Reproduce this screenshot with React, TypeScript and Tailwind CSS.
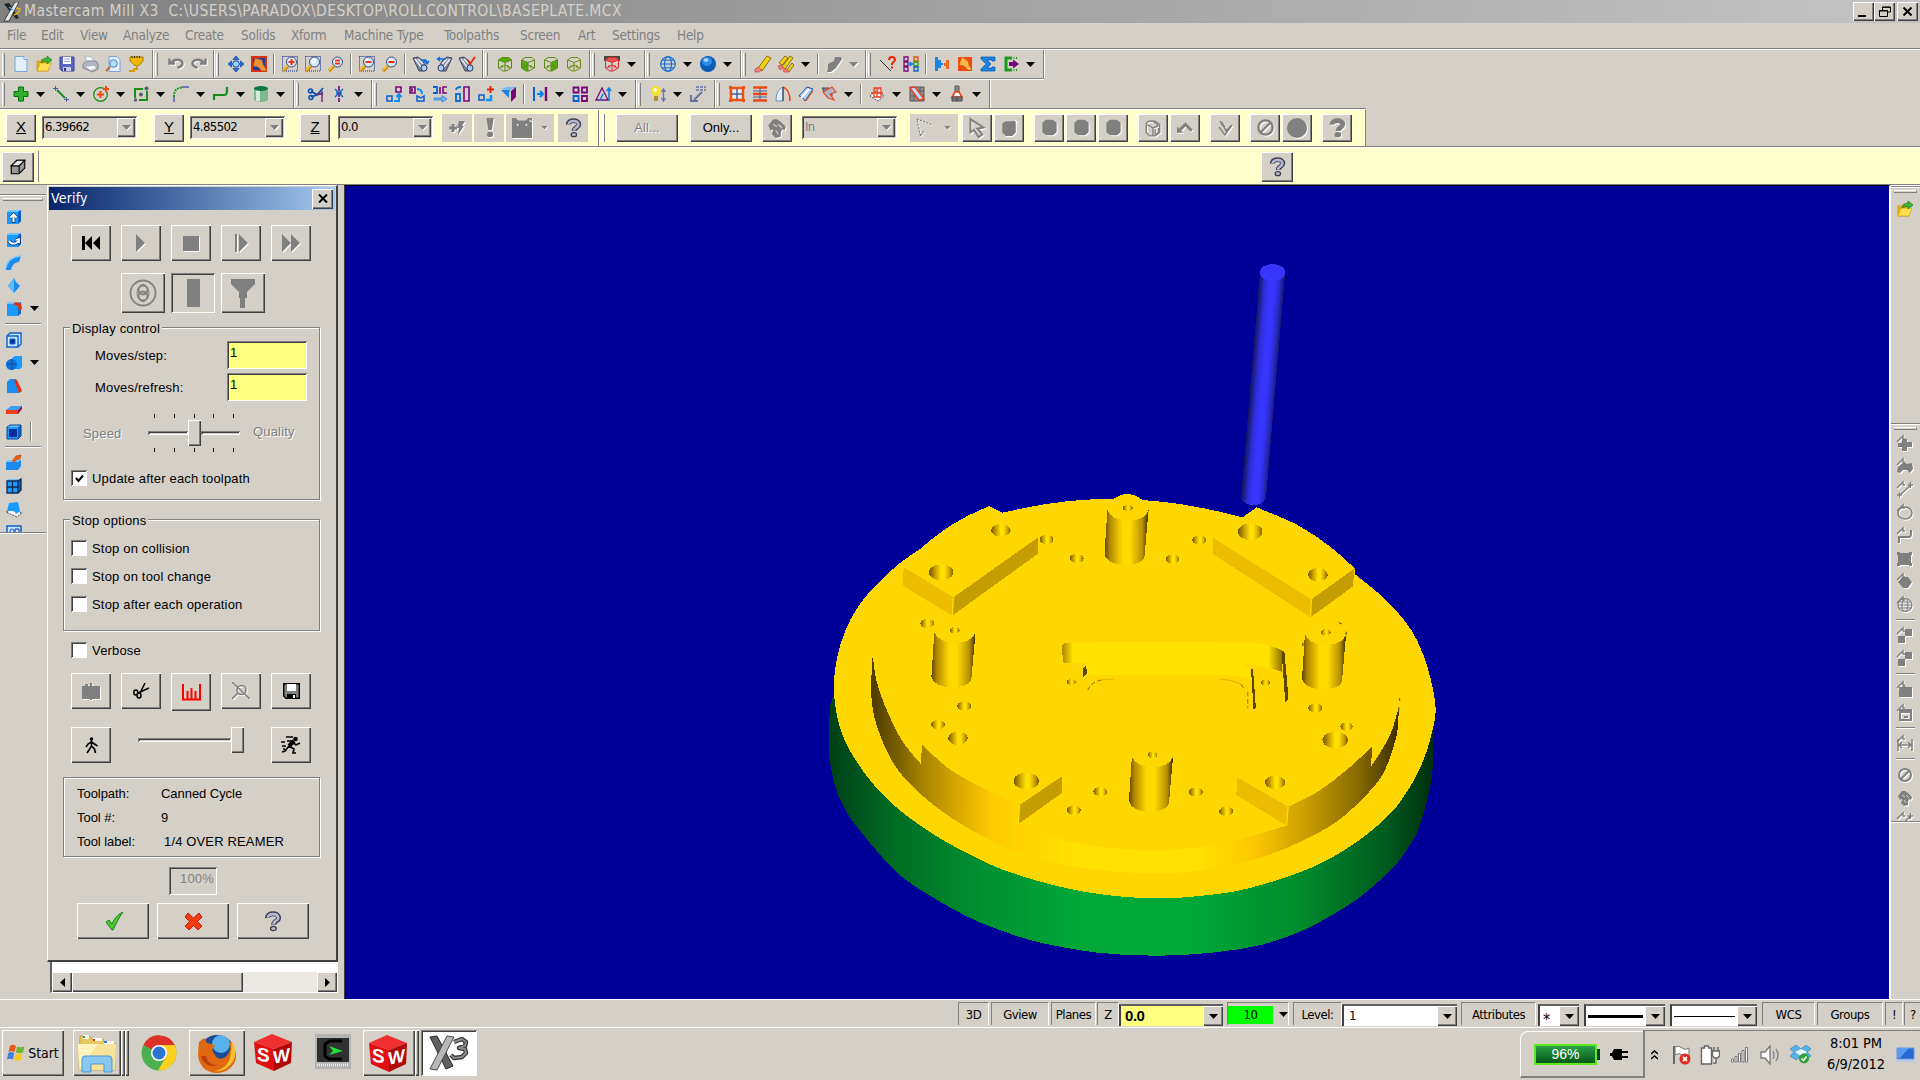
import React from "react";

type Kids = { children?: React.ReactNode; className?: string };

const RAISED =
  "bg-[#d4d0c8] shadow-[inset_1px_1px_0_#fff,inset_-1px_-1px_0_#404040,inset_-2px_-2px_0_#808080]";
const SUNK = "shadow-[inset_1px_1px_0_#808080,inset_-1px_-1px_0_#fff,inset_2px_2px_0_#404040]";
const UI = "font-['DejaVu_Sans_Condensed','DejaVu_Sans',sans-serif]";
const EMB = "drop-shadow-[1px_1px_0_#fff]";

/* ---------- icons, drawn on a 16 unit grid ---------- */

const lens = (
  <>
    <path d="M1 15l5-5" stroke="#c98a10" strokeWidth="3.2" />
    <path d="M1 14l5-5" stroke="#ffc83a" strokeWidth="1.4" />
    <circle cx="9.5" cy="6" r="5" fill="#cfe6fb" stroke="#3b4f80" />
    <circle cx="8.5" cy="5" r="2.6" fill="#fff" fillOpacity=".8" />
  </>
);
const dots = <rect x=".5" y=".5" width="15" height="14.5" fill="none" stroke="#0a2a9c" strokeDasharray="1 1" />;
const binoc = (
  <>
    <path d="M0 2l5-1 5 4 3 6-3 4-4 0z" fill="#7c849c" stroke="#3f4660" />
    <path d="M2 3l7 9M5 3l5 5" stroke="#e8ecf5" strokeWidth="1.6" />
    <ellipse cx="11" cy="12" rx="3" ry="3.2" fill="#a9cdf2" stroke="#2d3a5c" />
  </>
);
const cubeLines = (c: string) => (
  <path d="M1.5 4L5 1.5h7L14.500 4v8L9 15H6L1.500 12zM1.500 4L8 6.500 14.500 4M8 6.500V15M5 9v3M11 9v3M8 9L2 12M8 9l6 3" fill="none" stroke={c} />
);
const hex = <path d="M5 1.500h6L14 4v8l-3 2.500H5L2 12V4z" fill="#808080" />;
const solid = (
  <>
    <path d="M1 3l3-2h11v11l-3 3H1z" fill="#0a8bf0" />
    <path d="M1 3h11v12H1z" fill="#1a9bff" />
    <path d="M12 3l3-2v11l-3 3z" fill="#0560c0" />
    <path d="M1 3l3-2h11l-3 2z" fill="#6cc4ff" />
  </>
);
const qmark = (a: string, b: string) => (
  <>
    <path d="M3.500 5.500C3.500 1 12.500 1 12.500 5.500c0 2.600-4 2.500-4 5.500" fill="none" stroke={b} strokeWidth="4" />
    <path d="M3.900 5.300C4 1.500 12 1.500 12.200 5.500c0 2.400-3.800 2.600-3.800 5.200" fill="none" stroke={a} strokeWidth="2.200" />
    <ellipse cx="8.300" cy="14" rx="2.300" ry="1.700" fill={a} stroke={b} />
  </>
);
const brush = (
  <>
    <path d="M1 1h14v14H1z" fill="#f04a10" />
    <path d="M5 1l6 4 1 4 3 5-4 0-4-4-5-1z" fill="#ffb84a" stroke="#c05a10" strokeWidth=".6" />
  </>
);
const chk = <path d="M0 6L6 0v3h2" fill="none" stroke="#808080" strokeWidth="1.400" />;

const ICONS: Record<string, React.ReactNode> = {
  new: (
    <>
      <path d="M2 .5h9l3 3v12H2z" fill="#e4effc" stroke="#7aa2dc" />
      <path d="M11 .5v3h3" fill="#fff" stroke="#7aa2dc" />
    </>
  ),
  open: (
    <>
      <path d="M1 5h4l1-2h6v12H1z" fill="#e8b410" stroke="#b98500" strokeWidth=".6" />
      <path d="M1 15l3-8h11l-3 8z" fill="#ffdf50" stroke="#c99a00" strokeWidth=".6" />
      <path d="M5 7c1-4 4-5 6-5V0l5 4-5 4V5.500c-2 0-4 0-6 1.500z" fill="#3cb43c" stroke="#187018" strokeWidth=".6" />
    </>
  ),
  save: (
    <>
      <path d="M1 1h14v14H3l-2-2z" fill="#5a64c8" stroke="#3a4298" />
      <path d="M4 1h8v7H4z" fill="#fff" />
      <path d="M5 3h6M5 5.500h6" stroke="#9aa0d8" />
      <path d="M4 11h8v4H4z" fill="#c8ccec" />
      <path d="M5 12h2v3H5z" fill="#303878" />
    </>
  ),
  print: (
    <>
      <path d="M3 0l7 1 2 6H5z" fill="#f4f8ff" stroke="#9ab" strokeWidth=".7" />
      <path d="M1 8l4-3h9l2 3v5l-5 3-10-4z" fill="#b4b8c4" stroke="#666c7c" strokeWidth=".7" />
      <path d="M4 11l8-1 2 2-5 2z" fill="#fff" />
    </>
  ),
  preview: (
    <>
      <path d="M4 .5h8l3 3v12H4z" fill="#e4effc" stroke="#7aa2dc" />
      <circle cx="8.500" cy="7.500" r="3.800" fill="#b8dcf8" stroke="#4a80b8" />
      <path d="M1 15l4-4" stroke="#b07838" strokeWidth="2.400" />
    </>
  ),
  post: (
    <>
      <path d="M2 1h13v4L11 9.500H7L2 5z" fill="#f0b800" stroke="#a87800" />
      <path d="M4 0v2M6.500 0v2M9 0v2M11.500 0v2" stroke="#403000" />
      <path d="M9 9v4H6v2H1" fill="none" stroke="#d89c00" strokeWidth="2" />
    </>
  ),
  undo: <path d="M1.500 2.500V7.500H7M3 7c3-5 12-4 11.500 1-.5 2.500-3 3-5 4" fill="none" stroke="#808080" strokeWidth="2.500" />,
  redo: <path d="M14.500 2.500V7.500H9M13 7C10 2 1 3 1.500 8c.5 2.500 3 3 5 4" fill="none" stroke="#808080" strokeWidth="2.500" />,
  pan: (
    <>
      <path d="M8 0l3 3.500H5zM8 16l3-3.500H5zM0 8l3.500-3v6zM16 8l-3.500-3v6z" fill="#1c7ce8" stroke="#0a3c98" strokeWidth=".7" />
      <path d="M6 5h4l1.500 3L10 11H6L4.500 8z" fill="#9cd0ff" stroke="#0a4cb0" />
    </>
  ),
  repaint: (
    <>
      <path d="M1 1h14v14H1z" fill="#1840a0" stroke="#d83010" strokeWidth="2" />
      <path d="M4 2l7 2 1 4 4 7-5 0-4-4-5-1z" fill="#f0923c" stroke="#a84a10" strokeWidth=".6" />
    </>
  ),
  zoomPlusBox: <>{dots}{lens}<path d="M9.500 3v6M6.500 6h6" stroke="#f03010" strokeWidth="2" /></>,
  zoomBox: <>{dots}{lens}</>,
  zoomEq: <>{lens}<path d="M7 4.500h5M7 7.500h5" stroke="#f03010" strokeWidth="1.800" /></>,
  zoomMinusBox: <>{dots}{lens}<path d="M6.500 6h6" stroke="#f03010" strokeWidth="2" /></>,
  zoomMinus: <>{lens}<path d="M6.500 6h6" stroke="#f03010" strokeWidth="2" /></>,
  bin1: <>{binoc}<path d="M8 4h4c2 0 2 2 2 4M11 5l3 3 2-3" stroke="#0a6ae0" fill="none" strokeWidth="1.400" /></>,
  bin2: <><g transform="matrix(-1 0 0 1 16 0)">{binoc}</g><path d="M1 3h9M4 1L1.500 3 4 5" stroke="#0a6ae0" fill="none" strokeWidth="1.400" /></>,
  bin3: <>{binoc}<path d="M9 4l2 4 5-7" stroke="#e02810" fill="none" strokeWidth="1.800" /></>,
  cubeTop: <><path d="M1.500 4L5 1.500h7L14.500 4 8 6.500z" fill="#58a810" />{cubeLines("#5c8c10")}</>,
  cubeFront: <><path d="M1.500 4L8 6.500V15H6l-4.500-3z" fill="#58a810" />{cubeLines("#5c8c10")}</>,
  cubeRight: <><path d="M14.500 4L8 6.500V15h1l5.500-3z" fill="#58a810" />{cubeLines("#5c8c10")}</>,
  cubeIso: cubeLines("#6c8c10"),
  cubeRed: (
    <>
      <path d="M0 0h16v5H0z" fill="#484848" />
      <path d="M1.500 4L5 1.500h7L14.500 4v8L9 15H6l-4.500-3z" fill="#d4d0c8" />
      <path d="M1.500 4L5 1.500h7L14.500 4 8 6.500z" fill="#f05050" />
      {cubeLines("#d82830")}
    </>
  ),
  globe: (
    <g fill="none" stroke="#0a6ad0" strokeWidth="1.100">
      <circle cx="8" cy="8" r="7.300" />
      <ellipse cx="8" cy="8" rx="3.500" ry="7.300" />
      <path d="M.7 8h14.600M2 4.200h12M2 11.800h12" />
    </g>
  ),
  ball: (
    <>
      <circle cx="8" cy="8" r="8" fill="#0a5cb4" />
      <ellipse cx="7" cy="5.500" rx="5" ry="4.500" fill="#2c8ce8" />
      <ellipse cx="6" cy="4" rx="2.500" ry="1.800" fill="#a8dcff" />
    </>
  ),
  pencil: (
    <>
      <path d="M3 12L12 0l4 2L7 15z" fill="#f0d010" stroke="#6c5800" strokeWidth=".8" />
      <path d="M0 13l3-2 4 3-3 2H0z" fill="#f88080" stroke="#c03030" strokeWidth=".6" />
    </>
  ),
  pencils: (
    <>
      <path d="M1 7L7 0l3 2-6 7zM4 11L12 0l3 2L7 13zM9 14l5-7 2 2-5 7z" fill="#f0d010" stroke="#6c5800" strokeWidth=".8" />
      <path d="M0 10l3-1 2 3-3 2zM5 14l4-1 2 3H6z" fill="#f88080" stroke="#c03030" strokeWidth=".6" />
    </>
  ),
  unerase: <path d="M2 8l6-3 1-4h6l1 2-6 9-5 4H1l1-4z" fill="#808080" />,
  what: (
    <>
      <path d="M0 4l11 11" stroke="#303030" />
      <path d="M9 4c0-4 6-4 6 0 0 2-3 2-3 4v1M12 10.500v2" fill="none" stroke="#e82808" strokeWidth="2" />
    </>
  ),
  chains: (
    <>
      <path d="M1 1h4v4H1zM1 6h4v4H1zM1 11h4v4H1z" fill="none" stroke="#780878" strokeWidth="1.300" />
      <path d="M11 1h4v4h-4z" fill="none" stroke="#f05010" strokeWidth="1.300" />
      <path d="M11 6h4v4h-4z" fill="none" stroke="#2c9c10" strokeWidth="1.300" />
      <path d="M11 11h4v4h-4z" fill="none" stroke="#0a60d0" strokeWidth="1.300" />
      <path d="M5 8h2M7 6l3 2-3 2z" fill="#0a80f0" stroke="#0a80f0" />
    </>
  ),
  puzzle: (
    <>
      <path d="M1 1h3v3h3v3h2v2H7v3H4v3H1z" fill="#1a84e0" />
      <path d="M15 4v9h-3v-3h-2V7h2V4z" fill="#f06818" />
    </>
  ),
  brush,
  sigma: <path d="M1 1h14v4h-3V4H7l4 4-4 4h5v-1h3v4H1v-2l5-5-5-5z" fill="#1c84e0" stroke="#0a50a8" strokeWidth=".7" />,
  exit: (
    <>
      <path d="M9 2H3v12h6" fill="none" stroke="#18a018" strokeWidth="3" />
      <path d="M6 6h4V3.500l6 4.500-6 4.500V10H6z" fill="#780878" />
      <path d="M11 1v2M13.500 1v2M11 13v2M13.500 13v2" stroke="#18a018" />
    </>
  ),
  plus: <path d="M5.500 1h5v4.500H15v5h-4.500V15h-5v-4.500H1v-5h4.500z" fill="#30b030" stroke="#087008" />,
  line: (
    <>
      <path d="M4 4l8 8" stroke="#189018" strokeWidth="2" />
      <path d="M0 2.500h5M2.500 0v5M11 13.500h5M13.500 11v5" stroke="#5858a8" />
    </>
  ),
  circ: (
    <>
      <circle cx="7.500" cy="8.500" r="6.800" fill="none" stroke="#189018" strokeWidth="1.300" />
      <path d="M4 8.500h7M7.500 5v7M10 3h6M13 0v6" stroke="#f84810" strokeWidth="2" />
    </>
  ),
  rect: (
    <>
      <path d="M2 12V3h8M6 14h8V5" fill="none" stroke="#189018" strokeWidth="2" />
      <circle cx="13.500" cy="2.500" r="2" fill="#586070" />
      <circle cx="8" cy="8.500" r="2" fill="#586070" />
      <circle cx="2.500" cy="14" r="1.700" fill="#586070" />
    </>
  ),
  fillet: (
    <>
      <path d="M1 16v-5M9 1h7" stroke="#5858a8" strokeWidth="1.500" />
      <path d="M1 11C1 5 3 2 9 1.500" fill="none" stroke="#189018" strokeWidth="2" strokeDasharray="2 1" />
    </>
  ),
  spline: <path d="M1 14V9h10c3 0 3-2 3-8" fill="none" stroke="#109018" strokeWidth="2.200" />,
  cyl: (
    <>
      <path d="M1 2h14v12c-3 2.500-11 2.500-14 0z" fill="#7cb890" />
      <path d="M3 3h4v12H3z" fill="#d4ecdc" />
      <ellipse cx="8" cy="2.500" rx="7" ry="2.500" fill="#087840" />
    </>
  ),
  trim: (
    <>
      <path d="M3 5l6 4 6-7M3 11l12-4" stroke="#0a50b0" strokeWidth="1.800" fill="none" />
      <ellipse cx="2.500" cy="5" rx="2" ry="2" fill="none" stroke="#0a50b0" strokeWidth="1.500" />
      <ellipse cx="3" cy="11.500" rx="2" ry="2" fill="none" stroke="#0a50b0" strokeWidth="1.500" />
      <path d="M8 8h7M14 5v11" stroke="#803080" strokeWidth="1.600" />
    </>
  ),
  brk: (
    <>
      <path d="M8 0v16" stroke="#803080" strokeWidth="2" strokeDasharray="5 1" />
      <path d="M4 3l4 4 4-4M4 11l4-4 4 4M5 7h6" stroke="#1060c8" strokeWidth="1.400" fill="none" />
    </>
  ),
  x1: <><path d="M10 1h5v5h-5z" fill="none" stroke="#780878" strokeWidth="1.600" /><path d="M1 10h5v5H1z" fill="none" stroke="#0a60d0" strokeWidth="1.600" /><path d="M8 15h5V9M10.500 11L13 8l2.500 3" fill="none" stroke="#0a90f0" strokeWidth="2" /></>,
  x2: <><path d="M1 1h5v6H1V5h2V3H1z" fill="none" stroke="#780878" strokeWidth="1.600" /><path d="M8 10v5h7v-5l-3 2z" fill="none" stroke="#0a60d0" strokeWidth="1.500" /><path d="M8 3c4 0 5 2 5 5" fill="none" stroke="#0a90f0" strokeWidth="2" /></>,
  x3: <><path d="M1 1h4v6H1" fill="none" stroke="#0a60d0" strokeWidth="1.800" /><path d="M15 1h-4v6h4M8 1v7" fill="none" stroke="#780878" strokeWidth="1.600" /><path d="M2 12h8V9.500l5 3.500-5 3V14H2z" fill="#70b8f8" stroke="#0a60d0" strokeWidth=".6" /></>,
  x4: <><path d="M1 8h4v7H1zM1 4c0-2 2-3 5-3" fill="none" stroke="#0a70d8" strokeWidth="1.800" /><path d="M9 1h5v14H9z" fill="none" stroke="#780878" strokeWidth="1.600" /></>,
  x5: <><path d="M1 9h5v5H1z" fill="none" stroke="#0a60d0" strokeWidth="1.600" /><path d="M8 14h5V9" fill="none" stroke="#0a90f0" strokeWidth="2.500" /><path d="M9 3.500h7M12.500 0v7" stroke="#f02010" strokeWidth="2" /></>,
  x6: <><path d="M0 3l6-2h9L9 4z" fill="#70b8f8" /><path d="M0 4h9l-1 3 0 5z" fill="#1a84e0" /><path d="M10 5l5-4v10l-5 5z" fill="#780878" /></>,
  x7: <><path d="M2 1v14" stroke="#0a60d0" strokeWidth="2" /><path d="M14 1v14" stroke="#780878" strokeWidth="2.400" /><path d="M5 8h5M8 5l3 3-3 3" stroke="#0a80f0" strokeWidth="2" fill="none" /></>,
  x8: <g fill="none" strokeWidth="1.800"><path d="M1.500 1.500h5v5h-5zM10 1.500h5v5h-5zM10 10h5v5h-5z" stroke="#780878" /><path d="M1.500 10h5v5h-5z" stroke="#0a60d0" /></g>,
  x9: <><path d="M1 14L7 2l6 12z" fill="none" stroke="#780878" strokeWidth="1.300" /><path d="M5 14l3-6M14 15V3M11.500 5L14 2l2 3" fill="none" stroke="#0a80e0" strokeWidth="1.600" /></>,
  bulb: <><circle cx="6" cy="5" r="5" fill="#f8e030" /><circle cx="5" cy="4" r="2" fill="#fffbd0" /><path d="M4 10h4v5H4z" fill="#b09030" /><path d="M13.500 4v10M11.500 6l2-3 2 3M11.500 12l2 3 2-3" fill="none" stroke="#6870a8" strokeWidth="1.300" /></>,
  dim: <><path d="M6 1h10M6 4h10" stroke="#6870a8" strokeDasharray="3 1" strokeWidth="1.400" /><path d="M12 6l-8 8M1 9v6h7" stroke="#6870a8" strokeWidth="2" fill="none" /></>,
  s1: <><path d="M2 2h12v12H2z" fill="#e8ecf8" stroke="#f05010" strokeWidth="2.500" /><path d="M8 3v10M3 8h10" stroke="#486098" strokeWidth="1.500" /><path d="M0 0h3v3H0zM13 0h3v3h-3zM0 13h3v3H0zM13 13h3v3h-3z" fill="#f05010" /></>,
  s2: <><path d="M1 1.500h14M1 14.500h14M1 8h14" stroke="#f04810" strokeWidth="2.400" /><path d="M1 5h14M1 11h14M8 2v12" stroke="#486098" /></>,
  s3: <><path d="M1 15C1 8 3 3 8 1v14z" fill="#e0f0ff" stroke="#6890c0" /><path d="M8 1c5 2 7 7 7 14" fill="#c8dcf4" stroke="#f04810" strokeWidth="1.600" /><path d="M8 1v14" stroke="#404858" strokeWidth="1.300" /></>,
  s4: <><path d="M1 10L9 1l6 2-8 12-3-4z" fill="#a8d4f8" stroke="#385080" /><path d="M3 12l8-9" stroke="#fff" strokeWidth="2" /><path d="M8 15l7-10" stroke="#f04810" /></>,
  s5: <><path d="M1 2h7l3 3v5H6z" fill="#808898" stroke="#404858" /><path d="M2 6l9-5 4 5-6 2 4 6-6-2z" fill="#a8b8d8" stroke="#f04810" strokeWidth="1.200" /></>,
  m1: <><path d="M1 10l6-5 8 5-6 5z" fill="#fff" stroke="#485068" strokeDasharray="2 1" /><path d="M5 2h7v9H5zM2 7h12M8 2v9" fill="none" stroke="#f04020" strokeWidth="1.300" /></>,
  m2: <><path d="M1 1h14v14H1z" fill="#908c90" stroke="#585458" /><path d="M1 5h14M1 10h14M5 1v14M11 1v14" stroke="#585458" strokeWidth=".8" /><path d="M1 2l5-1 9 12-5 1z" fill="#b8e0ff" stroke="#f04020" strokeWidth="1.500" /></>,
  m3: <><path d="M6 0h4v6H6z" fill="#888" stroke="#555" /><path d="M6 6h4l3 5H3z" fill="#fff" stroke="#f04020" strokeWidth="1.700" /><path d="M3 11h10v4H3zM3 13h10M8 11v4" fill="#999" stroke="#444" /></>,
  snap: <><path d="M0 8h8M4 4v8" stroke="#808080" strokeWidth="3" /><path d="M10 1h6l-3 5h2l-6 9 1-7H8z" fill="#808080" /></>,
  bang: <><path d="M5.500 0h6l-1.500 10H7z" fill="#808080" /><ellipse cx="8.500" cy="13.800" rx="2.500" ry="2.200" fill="#808080" /></>,
  bag: <><path d="M0 0h3l2 2h6l2-2h3v16H0z" fill="#808080" /><path d="M4 5l1 1M11 5l1 1M14 2l2 1" stroke="#fff" /></>,
  help: qmark("#b4b8cc", "#3c3e50"),
  helpG: qmark("#808080", "#808080"),
  gear: <><path d="M1 6l4-5 3 0 3 2 4 4-1 3-2-1-1 3 0 3-4 1-3-3 1-4-2 1z" fill="#808080" /><path d="M5 5l3 2M9 5l3 3M7 10l2 3" stroke="#d4d0c8" /></>,
  poly: <path d="M3 15L0 0l13 5M3 15l3-4" fill="none" stroke="#808080" strokeDasharray="2 1" />,
  cursor: <path d="M2 1v11l3-2 4 6 3-2-4-5 5-1z" fill="none" stroke="#808080" strokeWidth="1.700" />,
  hex,
  hexC: <><path d="M2 4l3-2h6l3-1v11l-3 3H5l-3-3z" fill="#808080" /><path d="M13 1l2 2" stroke="#fff" /></>,
  cubeG: <><path d="M4 2h6l4 3v7l-4 3H5l-3-3V4z" fill="none" stroke="#808080" strokeWidth="1.200" /><path d="M8 2l5 4M3 5l5 3v7M13 6l-5 2M10 9v5l3-2V8" fill="none" stroke="#808080" strokeWidth="1.300" /></>,
  back: <path d="M0 13V7l2 2 6-6 7 7-2 2-5-5-4 4 2 2z" fill="#808080" />,
  accept: <path d="M3 1l5 6M2 7l6 8 7-10-6 6-4-9M4 3l6 8" fill="none" stroke="#808080" strokeWidth="1.500" />,
  no: <><circle cx="8" cy="8" r="6" fill="none" stroke="#808080" strokeWidth="2" /><path d="M4 12l8-8" stroke="#808080" strokeWidth="2" /></>,
  disc: <circle cx="8" cy="8" r="8" fill="#808080" />,
  block: <><path d="M2 7l5-5h7v7l-5 5H2z" fill="#989898" stroke="#000" /><path d="M2 7l5-5h7L9 7z" fill="#e4e4e4" stroke="#000" /><path d="M9 7v7" stroke="#000" /></>,
  // solids toolbar
  sExt: <>{solid}<path d="M7.500 14V6M4.500 8.500l3-3 3 3" fill="none" stroke="#083878" strokeWidth="3.600" /><path d="M7.500 13V6M4.500 8.500l3-3 3 3" fill="none" stroke="#fff" strokeWidth="2" /></>,
  sRev: <>{solid}<path d="M3 9c2 4 8 3 9 0M10 8l3-1v4" fill="none" stroke="#083878" strokeWidth="3.600" /><path d="M3 9c2 4 8 3 9 0M10 8l3-1v4" fill="none" stroke="#fff" strokeWidth="1.800" /></>,
  sSwp: <><path d="M0 15C0 6 6 1 15 1l-2 6c-4 0-7 3-8 8z" fill="#1a8cf0" /><path d="M0 13C1 6 6 2 15 1" fill="none" stroke="#7cc8ff" strokeWidth="1.500" /></>,
  sLoft: <><path d="M8 0l2 4 4 4-6 7-6-7 3-4z" fill="#1a8cf0" /><path d="M8 0v15L2 8z" fill="#60b8ff" /></>,
  sFil: <>{solid}<path d="M8 2c5-2 8 1 8 6l-3 2c0-4-1-6-5-6z" fill="#e83010" /></>,
  sShell: <><path d="M1 4l3-3h11v11l-3 3H1z" fill="#c8e4fc" stroke="#0a60d0" strokeWidth="1.400" /><path d="M1 4h11v11" fill="none" stroke="#0a60d0" strokeWidth="1.400" /><path d="M4 7h5v5H4z" fill="#0a3090" stroke="#0a60d0" /></>,
  sBool: <><path d="M6 3l3-2h7v11l-2 2H6z" fill="#1a9bff" /><circle cx="5.500" cy="9.500" r="5.500" fill="#0a74d8" /><path d="M6 4v11M1 9h10" stroke="#0a4c9c" /></>,
  sDraft: <><path d="M1 4l3-3h6l5 12-3 2H1z" fill="#1a8cf0" /><path d="M8 2h3l5 11-3 2z" fill="#e83010" /></>,
  sTrim: <><path d="M0 9l5-4h11l-4 4z" fill="#38a0f8" /><path d="M0 9h12v4H0z" fill="#f03c10" /><path d="M12 9l4-4v3l-4 5z" fill="#901040" /></>,
  sThick: <>{solid}<path d="M3 5h8v8H3z" fill="#082c98" /><path d="M1 3l3-2h11v11l-3 3H1z" fill="none" stroke="#064090" /></>,
  sRem: <><path d="M0 7l3-2h12v6l-3 4H0z" fill="#1a8cf0" /><path d="M0 7l3-2h12l-3 2z" fill="#7cc8ff" /><path d="M6 6l4-5 5-1-1 4-4 1-1 2z" fill="#f06018" stroke="#a03008" strokeWidth=".5" /></>,
  sGrid: <>{solid}<path d="M1 3h11v12H1zM6.500 3v12M1 9h11M12 3l3-2v11l-3 3" fill="none" stroke="#102850" strokeWidth="1.300" /></>,
  sSurf: <><path d="M0 11l6-3 10 4-5 4z" fill="#fff" stroke="#404858" strokeDasharray="2 1" /><path d="M3 2l9-1 2 9-4 3c-1-4-5-3-9-3z" fill="#1a9bff" /></>,
  sLast: <><path d="M1 2h14v14H1z" fill="#c8e4fc" stroke="#0a60d0" strokeWidth="1.500" /><circle cx="6" cy="7" r="2" fill="none" stroke="#0a60d0" /><path d="M9 5h4v4H9z" fill="none" stroke="#0a3090" /></>,
  // right side quick masks
  qPlus: <>{chk}<path d="M5 3h5v3h5v5h-5v4H5v-4H1V7h4z" fill="#808080" /></>,
  qBone: <>{chk}<path d="M1 8l6-5 3 2 5-1 1 6-3 4-3-3H6l-3 3-3-1z" fill="#808080" /></>,
  qLine: <>{chk}<path d="M3 13L13 4M0 13h5M2.500 10.500v5M11 3h5M13.500 0v6" fill="none" stroke="#808080" strokeWidth="1.300" /></>,
  qCirc: <>{chk}<ellipse cx="8" cy="8" rx="7" ry="6" fill="none" stroke="#808080" strokeWidth="1.500" /></>,
  qSpl: <>{chk}<path d="M2 15V9h10c2 0 2-1 2-7" fill="none" stroke="#808080" strokeWidth="2" /></>,
  qSq: <path d="M0 1h3v1h9V1h3v3h-1v8h1v3h-3v-1H3v1H0v-3h1V4H0z" fill="#808080" />,
  qDia: <>{chk}<path d="M1 8l4-5h6l4 5-4 6H6z" fill="#808080" /></>,
  qGlobe: <>{chk}<g fill="none" stroke="#808080" strokeWidth="1.200"><ellipse cx="8" cy="8" rx="7" ry="6.500" /><ellipse cx="8" cy="8" rx="3" ry="6.500" /><path d="M1 8h14M2 5h12M2 11h12" /></g></>,
  qTwo: <>{chk}<path d="M8 1h7v7H8zM1 8h7v7H1z" fill="#808080" /></>,
  qFold: <>{chk}<path d="M2 5h3l2-2 2 2h6v10H2z" fill="#808080" /></>,
  qBox: <>{chk}<path d="M3 5h11v10H3z" fill="none" stroke="#808080" strokeWidth="2" /><path d="M3 4h11v4H3zM7 11h4v2H7z" fill="#808080" /></>,
  qDim: <>{chk}<path d="M1 3v12M15 3v12M2 9h12M5 6L2 9l3 3M11 6l3 3-3 3" fill="none" stroke="#808080" strokeWidth="1.500" /></>,
};

function Ic({ n, g = false, s = 16 }: { n: string; g?: boolean; s?: number }) {
  return (
    <svg viewBox="0 0 16 16" width={s} height={s} className={`shrink-0 overflow-visible ${g ? EMB : ""}`} fill="none">
      {ICONS[n]}
    </svg>
  );
}
const Tri = ({ g = false }: { g?: boolean }) => (
  <svg viewBox="0 0 9 5" width="9" height="5" className={g ? EMB : ""}>
    <path d="M0 0h9L4.500 5z" fill={g ? "#808080" : "#000"} />
  </svg>
);

/* ---------- toolbar parts ---------- */

/** Toolbar group; "v" opens a menu arrow, "|" a separator, a leading "-" a disabled icon. */
function Group({ items, className, grip = "mr-[6px]" }: { items: string; className: string; grip?: string }) {
  return (
    <div className={`flex h-full shrink-0 items-center border-r border-[#808080] shadow-[1px_0_0_#fff] ${className}`}>
      <i className={`ml-[2px] h-[23px] w-[3px] shrink-0 border-l border-r border-l-white border-r-[#808080] ${grip}`} />
      {items.split(" ").map((k, i) =>
        k === "v" || k === "-v" ? (
          <span key={i} className="flex w-[17px] shrink-0 justify-center"><Tri g={k === "-v"} /></span>
        ) : k === "|" ? (
          <span key={i} className="flex w-2 shrink-0 justify-center"><i className="h-5 w-[2px] border-l border-r border-l-[#808080] border-r-white" /></span>
        ) : (
          <span key={i} className="flex w-[23px] shrink-0 justify-center"><Ic n={k.replace("-", "")} g={k[0] === "-"} /></span>
        )
      )}
    </div>
  );
}

const Btn = ({ children, className = "" }: Kids) => (
  <div className={`flex shrink-0 items-center justify-center ${RAISED} ${className}`}>{children}</div>
);
const Flat = ({ children, className = "w-[30px]" }: Kids) => (
  <div className={`flex h-7 shrink-0 items-center justify-center gap-2 bg-[#d4d0c8] ${className}`}>{children}</div>
);
function Combo({ children, className = "", dis = true }: Kids & { dis?: boolean }) {
  return (
    <div className={`flex h-[23px] w-[95px] shrink-0 items-stretch bg-[#d4d0c8] p-[2px] ${SUNK} ${className}`}>
      <span className="flex-1 pl-px text-[13px] leading-[17px] tracking-[-0.6px]">{children}</span>
      <Btn className="w-[18px]"><Tri g={dis} /></Btn>
    </div>
  );
}

function CoordBar() {
  const b = "h-7 w-[30px]";
  return (
    <div className={`flex h-[36px] w-[1366px] items-center border-r border-[#808080] bg-[#ffffcc] pb-[1px] pl-[6px] text-[13px] ${UI}`}>
      <Btn className={b}><u className="font-['Liberation_Sans'] text-[15px] font-normal">X</u></Btn>
      <Combo className="ml-[6px]">6.39662</Combo>
      <Btn className={`ml-[17px] ${b}`}><u className="font-['Liberation_Sans'] text-[15px]">Y</u></Btn>
      <Combo className="ml-[6px]">4.85502</Combo>
      <Btn className={`ml-[15px] ${b}`}><u className="font-['Liberation_Sans'] text-[15px]">Z</u></Btn>
      <Combo className="ml-2">0.0</Combo>
      <Flat className="ml-[9px] w-[30px]"><Ic n="snap" g /></Flat>
      <Flat className="ml-[2px] w-[30px]"><Ic n="bang" g s={19} /></Flat>
      <Flat className="ml-[2px] w-[48px]"><Ic n="bag" g s={20} /><span className="scale-75"><Tri g /></span></Flat>
      <Flat className="ml-1 w-[30px]"><Ic n="help" s={19} /></Flat>
      <i className="ml-[10px] h-9 w-px bg-[#808080]" />
      <i className="ml-[3px] h-7 w-[3px] border-l border-r border-l-white border-r-[#808080]" />
      <Btn className="ml-[11px] h-7 w-[62px]"><span className="font-['Liberation_Sans'] text-[13px] text-[#808080] [text-shadow:1px_1px_0_#fff]">All...</span></Btn>
      <Btn className="ml-[12px] h-7 w-[62px]"><span className="font-['Liberation_Sans'] text-[13px]">Only...</span></Btn>
      <Btn className={`ml-[10px] ${b}`}><Ic n="gear" g s={20} /></Btn>
      <Combo className="ml-[10px] text-[#808080]">In</Combo>
      <Flat className="ml-[13px] w-[48px]"><Ic n="poly" g s={18} /><span className="scale-75"><Tri g /></span></Flat>
      <Btn className={`ml-1 ${b}`}><Ic n="cursor" g s={19} /></Btn>
      <Btn className={`ml-[2px] ${b}`}><Ic n="hexC" g s={18} /></Btn>
      <Btn className={`ml-[10px] ${b}`}><Ic n="hex" g s={19} /></Btn>
      <Btn className={`ml-[2px] ${b}`}><Ic n="hex" g s={19} /></Btn>
      <Btn className={`ml-[2px] ${b}`}><Ic n="hex" g s={19} /></Btn>
      <Btn className={`ml-[10px] ${b}`}><Ic n="cubeG" g s={18} /></Btn>
      <Btn className={`ml-[2px] ${b}`}><Ic n="back" g s={17} /></Btn>
      <Btn className={`ml-[10px] ${b}`}><Ic n="accept" g s={16} /></Btn>
      <Btn className={`ml-[10px] ${b}`}><Ic n="no" g s={19} /></Btn>
      <Btn className={`ml-[2px] ${b}`}><Ic n="disc" g s={20} /></Btn>
      <Btn className={`ml-[10px] ${b}`}><Ic n="helpG" g s={19} /></Btn>
    </div>
  );
}

/* ---------- side toolbars ---------- */

function SideIcons({ items, g = false, className = "" }: { items: string; g?: boolean; className?: string }) {
  return (
    <div className={`flex flex-col overflow-hidden ${className}`}>
      {items.split(" ").map((k, i) =>
        k === "|" ? (
          <span key={i} className="flex h-2 shrink-0 items-center"><i className="h-[2px] w-full border-t border-b border-t-[#808080] border-b-white" /></span>
        ) : (
          <span key={i} className="flex h-[23px] shrink-0 items-center gap-2 pl-px">
            <Ic n={k.replace("+", "")} g={g} />
            {k.endsWith("+") && <Tri />}
            {k === "sThick" && <i className="h-[19px] w-px bg-[#808080] shadow-[1px_0_0_#fff]" />}
          </span>
        )
      )}
    </div>
  );
}
const HLine = () => <div className="h-[2px] shrink-0 border-t border-b border-t-[#808080] border-b-white" />;
const HGrip = ({ className = "" }: Kids) => (
  <div className={`h-[3px] shrink-0 border-t border-b border-r border-t-white border-b-[#808080] border-r-[#808080] ${className}`} />
);

/* ---------- verify dialog ---------- */

function Check({ children, on = false, className = "" }: Kids & { on?: boolean }) {
  return (
    <div className={`flex h-4 items-center ${className}`}>
      <span className={`mr-[5px] flex h-4 w-4 shrink-0 items-center justify-center bg-white ${SUNK}`}>
        {on && <svg width="9" height="9" viewBox="0 0 9 9"><path d="M1 4l2.500 3L8 1.500" fill="none" stroke="#000" strokeWidth="2" /></svg>}
      </span>
      {children}
    </div>
  );
}
const Box = ({ label, children, className = "" }: Kids & { label?: string }) => (
  <div className={`relative border border-[#808080] shadow-[1px_1px_0_#fff,inset_1px_1px_0_#fff] ${className}`}>
    {label && <span className="absolute -top-[7px] left-[6px] bg-[#d4d0c8] px-[2px] leading-[15px]">{label}</span>}
    {children}
  </div>
);
const Ticks = () => (
  <div className="ml-[6px] flex w-[80px] justify-between">
    {[0, 1, 2, 3, 4].map((t) => <i key={t} className="h-1 w-px bg-black" />)}
  </div>
);
const B40 = ({ children, className = "h-9" }: Kids) => <Btn className={`w-10 ${className}`}>{children}</Btn>;

function VerifyDialog() {
  return (
    <div className="flex h-[777px] w-[291px] flex-col border-l border-t border-r-2 border-b-2 border-l-white border-t-white border-r-[#404040] border-b-[#404040] bg-[#d4d0c8] p-px font-['Liberation_Sans'] text-[13px] leading-[15px] tracking-[0.18px]">
      <div className={`flex h-[23px] shrink-0 items-center justify-between bg-gradient-to-r from-[#0a246a] to-[#a6caf0] pl-[2px] pr-[2px] text-[14px] font-medium text-white ${UI}`}>
        Verify
        <Btn className="h-[20px] w-[21px]">
          <svg width="10" height="9" viewBox="0 0 10 9"><path d="M1 .5l8 8M9 .5l-8 8" stroke="#000" strokeWidth="2" /></svg>
        </Btn>
      </div>
      <div className="ml-[22px] mt-[15px] flex gap-[10px]">
        <B40><svg width="18" height="14" viewBox="0 0 18 14" className="-ml-px"><path d="M0 0h3v14H0zM10 0v14L3 7zM18 0v14l-7-7z" fill="#000" /></svg></B40>
        <B40><svg width="10" height="18" viewBox="0 0 10 18" className={EMB}><path d="M0 0l9 9-9 9z" fill="#808080" /></svg></B40>
        <B40><i className="h-[15px] w-4 bg-[#808080] shadow-[1px_1px_0_#fff]" /></B40>
        <B40><svg width="13" height="18" viewBox="0 0 13 18" className={EMB}><path d="M0 0h2v18H0zM4 0l9 9-9 9z" fill="#808080" /></svg></B40>
        <B40><svg width="18" height="18" viewBox="0 0 18 18" className={EMB}><path d="M0 0l9 9-9 9zM9 0l9 9-9 9z" fill="#808080" /></svg></B40>
      </div>
      <div className="ml-[72px] mt-[12px] flex gap-[6px]">
        <Btn className="h-10 w-11">
          <svg width="28" height="28" viewBox="0 0 28 28" fill="none" stroke="#808080" strokeWidth="1.800"><circle cx="14" cy="14" r="12.500" /><circle cx="14" cy="11" r="4.500" /><circle cx="14" cy="17" r="4.500" /><ellipse cx="14" cy="14" rx="6" ry="8.500" strokeWidth="1" /></svg>
        </Btn>
        <div className={`flex h-10 w-11 items-center justify-center ${SUNK}`}><i className="h-7 w-[13px] bg-[#808080]" /></div>
        <Btn className="h-10 w-11">
          <svg width="24" height="29" viewBox="0 0 24 29"><path d="M0 0h24v5l-8 8v6h-2v10H9V19H8v-6L0 5z" fill="#808080" /></svg>
        </Btn>
      </div>
      <Box label="Display control" className="ml-[14px] mt-[14px] h-[173px] w-[257px] shrink-0">
        <div className="ml-[31px] mt-[13px] flex h-7 items-center"><span className="w-[132px]">Moves/step:</span><span className={`h-7 w-20 bg-[#ffff80] pl-[3px] pt-[4px] ${SUNK}`}>1</span></div>
        <div className="ml-[31px] mt-1 flex h-7 items-center"><span className="w-[132px]">Moves/refresh:</span><span className={`h-7 w-20 bg-[#ffff80] pl-[3px] pt-[4px] ${SUNK}`}>1</span></div>
        <div className="ml-[19px] mt-[13px] flex h-[38px] items-center text-[#808080] [text-shadow:1px_1px_0_#fff]">
          <span className="w-[65px]">Speed</span>
          <div className="flex w-[92px] flex-col">
            <Ticks />
            <div className="my-[2px] flex h-[26px] items-center">
              <i className={`h-[4px] w-10 ${SUNK}`} />
              <i className={`h-[26px] w-[13px] ${RAISED}`} />
              <i className={`h-[4px] w-[39px] ${SUNK}`} />
            </div>
            <Ticks />
          </div>
          <span className="ml-[13px] -mt-[3px]">Quality</span>
        </div>
        <Check on className="ml-[7px] mt-[18px]">Update after each toolpath</Check>
      </Box>
      <Box label="Stop options" className="ml-[14px] mt-[19px] h-[112px] w-[257px] shrink-0">
        <Check className="ml-[7px] mt-[20px]">Stop on collision</Check>
        <Check className="ml-[7px] mt-[12px]">Stop on tool change</Check>
        <Check className="ml-[7px] mt-[12px]">Stop after each operation</Check>
      </Box>
      <Check className="ml-[22px] mt-[11px] shrink-0">Verbose</Check>
      <div className="ml-[22px] mt-[15px] flex h-9 shrink-0 items-start gap-[10px]">
        <B40><svg width="18" height="17" viewBox="0 0 18 17" className={EMB}><path d="M0 3h3V1h3v2h2V0h2v3h8v13h-8v1H8v-1H0z" fill="#808080" /></svg></B40>
        <B40><svg width="17" height="16" viewBox="0 0 17 16" fill="none" stroke="#000" strokeWidth="1.500"><ellipse cx="2.800" cy="9.500" rx="2" ry="2.500" /><ellipse cx="6" cy="12.500" rx="2" ry="2.500" /><path d="M5 10L16 5M7 10l5-10" /></svg></B40>
        <B40 className="h-[38px]"><svg width="19" height="17" viewBox="0 0 19 17"><path d="M1 0v15.500h17V0M5.500 15V7M9.500 15V4M13.500 15V7" fill="none" stroke="#f00" strokeWidth="2" /></svg></B40>
        <B40><svg width="18" height="18" viewBox="0 0 18 18" fill="none" stroke="#808080" strokeWidth="1.600" className={EMB}><path d="M0 0l18 17M0 17l6-6" /><circle cx="9.500" cy="8" r="4.500" /></svg></B40>
        <B40><svg width="17" height="16" viewBox="0 0 17 16"><path d="M.7.700h15.600v14.600H3L.7 13z" fill="#808080" stroke="#000" strokeWidth="1.400" /><path d="M4 1h9v7H4z" fill="#fff" /><path d="M4 11h9v5H4z" fill="#000" /><path d="M10 12h2v3h-2z" fill="#fff" /></svg></B40>
      </div>
      <div className="ml-[22px] mt-[18px] flex h-9 shrink-0 items-start">
        <B40><svg width="14" height="17" viewBox="0 0 14 17" className="ml-px"><circle cx="6.500" cy="2" r="1.700" fill="#000" /><path d="M6.500 3v6M6.500 5L3 7 1 10M6.500 5l3 2 3 2M6.500 9L4 13l-2 3M6.500 9l3 3 1 4" fill="none" stroke="#000" strokeWidth="1.600" /></svg></B40>
        <div className="ml-[27px] flex items-center">
          <i className={`h-[4px] w-[93px] ${SUNK}`} />
          <i className={`h-[26px] w-[13px] ${RAISED}`} />
        </div>
        <B40 className="ml-[27px] h-9"><svg width="20" height="19" viewBox="0 0 20 19"><circle cx="14.500" cy="3" r="2.300" fill="#000" /><path d="M13 5L8 10" stroke="#000" strokeWidth="4" /><path d="M8 10l5 3-1 4 3 0M8 10l-4 5-3 1M6 5h5l4 4 4-2M5 1h7M0 6h4M1 10h4M2 13h2" fill="none" stroke="#000" strokeWidth="1.700" /></svg></B40>
      </div>
      <Box className="ml-[14px] mt-[14px] h-[80px] w-[257px] shrink-0 text-[13px] leading-6 tracking-[-0.05px]">
        <div className="mt-[4px] grid grid-cols-[84px_1fr] pl-[13px]">
          <span>Toolpath:</span><span>Canned Cycle</span>
          <span>Tool #:</span><span>9</span>
          <span>Tool label:</span><span className="whitespace-nowrap pl-[3px] tracking-[0.15px]">1/4 OVER REAMER</span>
        </div>
      </Box>
      <div className={`ml-[120px] mt-[10px] h-7 w-12 shrink-0 pr-[3px] pt-[4px] text-right text-[#808080] ${SUNK}`}>100%</div>
      <div className="ml-[28px] mt-2 flex gap-2">
        <Btn className="h-9 w-[72px]"><svg width="18" height="19" viewBox="0 0 18 19" className="ml-[3px]"><path d="M0 10l3-2 3 4C8 7 12 2 17 0c-4 5-7 12-10 18H6z" fill="#4cc82c" stroke="#188018" /></svg></Btn>
        <Btn className="h-9 w-[72px]"><svg width="19" height="19" viewBox="0 0 19 19"><path d="M4 1l5.500 5L15 1l3 4-4.500 4.500L18 14l-4 4-4.500-4.500L5 18l-4-4 4.500-4.500L1 5z" fill="#f83c10" stroke="#b82008" /></svg></Btn>
        <Btn className="h-9 w-[72px]"><Ic n="help" s={20} /></Btn>
      </div>
    </div>
  );
}

function HScroll() {
  return (
    <div className="ml-[3px] flex h-[31px] w-[288px] shrink-0 flex-col border-l-2 border-b border-r border-l-[#606060] border-b-white border-r-white bg-white">
      <div className="h-[10px]" />
      <div className="flex h-[20px] bg-[#ebe8e3]">
        <Btn className="w-5"><svg width="5" height="9" viewBox="0 0 5 9"><path d="M5 0v9L0 4.500z" /></svg></Btn>
        <Btn className="w-[171px]" />
        <div className="flex-1" />
        <Btn className="w-5"><svg width="5" height="9" viewBox="0 0 5 9"><path d="M0 0v9l5-4.500z" /></svg></Btn>
      </div>
    </div>
  );
}

/* ---------- 3D view ---------- */

type P = [number, number];
/** Catmull-Rom spline through the points, as cubic segments continuing from the first one. */
function curve(p: P[]): string {
  let d = `L${p[0][0]} ${p[0][1]}`;
  for (let i = 0; i < p.length - 1; i++) {
    const a = p[i - 1] ?? p[i], b = p[i], c = p[i + 1], e = p[i + 2] ?? c;
    d += `C${b[0] + (c[0] - a[0]) / 6} ${b[1] + (c[1] - a[1]) / 6} ${c[0] - (e[0] - b[0]) / 6} ${c[1] - (e[1] - b[1]) / 6} ${c[0]} ${c[1]}`;
  }
  return d;
}
const shape = (...parts: P[][]) => "M" + parts.map(curve).join("").slice(1) + "Z";

const TOP = shape(
  [[415, 78], [355, 112], [298, 155], [242, 210]],
  [[242, 210], [195, 250], [150, 300], [108, 355], [74, 420], [51, 490], [38, 560], [34, 635], [45, 725], [64, 790], [90, 845], [130, 912], [180, 975], [240, 1032], [305, 1083], [370, 1125], [450, 1170], [580, 1218], [700, 1245], [820, 1255], [930, 1248], [1050, 1225], [1200, 1165], [1310, 1090], [1390, 1010], [1430, 950], [1462, 885], [1490, 800], [1508, 700], [1502, 630], [1488, 560], [1468, 495], [1440, 435], [1385, 358], [1311, 283]],
  [[1310, 265], [1250, 200], [1170, 135], [1070, 82]],
  [[1035, 112], [960, 90], [870, 70], [790, 60]],
  [[790, 60], [770, 46], [745, 43], [720, 55]],
  [[720, 57], [640, 60], [550, 73], [446, 98]],
);
const SIDE = shape(
  [[35, 590], [34, 640]],
  [[24, 680], [22, 810], [28, 870], [40, 930], [60, 985], [90, 1040], [160, 1142], [205, 1195], [260, 1240], [330, 1290], [410, 1336], [530, 1385], [680, 1418], [820, 1427], [960, 1418], [1080, 1395], [1180, 1353], [1250, 1308], [1320, 1254], [1400, 1168], [1440, 1105], [1470, 1035], [1498, 900], [1503, 780], [1508, 690]],
);
const WALL = shape(
  [[128, 535], [126, 650], [140, 740], [180, 850], [240, 935], [330, 1020], [450, 1100], [560, 1145], [700, 1172], [850, 1180], [960, 1165], [1060, 1140], [1160, 1095], [1260, 1030], [1330, 955], [1380, 880], [1412, 770], [1418, 690]],
  [[1416, 690], [1395, 770], [1350, 860]],
  [[1353, 800], [1290, 870], [1220, 935], [1147, 980]],
  [[1143, 1037], [1050, 1070], [960, 1097], [850, 1110], [760, 1108], [650, 1095], [560, 1065], [487, 1030]],
  [[489, 975], [400, 925], [320, 870], [250, 795]],
  [[247, 852], [200, 780], [160, 680], [138, 600], [130, 535]],
);
const HOLES: [number, number, number, number][] = [
  [443, 151, 24, 19], [297, 277, 30, 24], [1054, 155, 30, 25], [1220, 284, 24, 20],
  [555, 179, 17, 14], [629, 235, 17, 14], [929, 180, 17, 14], [864, 237, 17, 14],
  [263, 430, 17, 14], [353, 678, 17, 14], [289, 734, 17, 14], [338, 775, 24, 20],
  [1213, 684, 17, 14], [1290, 740, 15, 13], [1262, 780, 31, 25], [1115, 907, 25, 20],
  [505, 903, 31, 25], [687, 935, 17, 14], [622, 991, 17, 14], [921, 936, 17, 14], [995, 994, 17, 14],
  [616, 606, 11, 9], [1091, 608, 11, 9],
  [754, 84, 12, 10], [330, 451, 12, 10], [1239, 457, 12, 10], [815, 824, 12, 10],
];
const PILLARS: P[] = [[0, 0], [-424, 367], [484, 373], [60, 740]];

function Viewport() {
  return (
    <svg width="1544" height="813" viewBox="345 186 1544 813" className="block shrink-0 bg-[#000099]" shapeRendering="crispEdges">
      <defs>
        <linearGradient id="green"><stop offset="0" stopColor="#004018" /><stop offset=".1" stopColor="#006a24" /><stop offset=".25" stopColor="#009030" /><stop offset=".42" stopColor="#00a838" /><stop offset=".6" stopColor="#00a838" /><stop offset=".78" stopColor="#008a2c" /><stop offset=".92" stopColor="#005a1e" /><stop offset="1" stopColor="#002c0e" /></linearGradient>
        <linearGradient id="wall"><stop offset="0" stopColor="#4c3a00" /><stop offset=".1" stopColor="#a88400" /><stop offset=".17" stopColor="#dcaa00" /><stop offset=".23" stopColor="#ffcc00" /><stop offset=".38" stopColor="#ffe000" /><stop offset=".62" stopColor="#ffe000" /><stop offset=".72" stopColor="#ffca00" /><stop offset=".82" stopColor="#cca000" /><stop offset=".92" stopColor="#8a6c00" /><stop offset="1" stopColor="#3c2e00" /></linearGradient>
        <linearGradient id="pillar"><stop offset="0" stopColor="#5a4400" /><stop offset=".12" stopColor="#b08800" /><stop offset=".4" stopColor="#ffd800" /><stop offset=".58" stopColor="#ffdc00" /><stop offset=".86" stopColor="#b89000" /><stop offset="1" stopColor="#3a2c00" /></linearGradient>
        <linearGradient id="hole"><stop offset="0" stopColor="#6c5400" /><stop offset=".25" stopColor="#c89c00" /><stop offset=".5" stopColor="#ffe400" /><stop offset=".65" stopColor="#ffdc00" /><stop offset=".85" stopColor="#c89c00" /><stop offset="1" stopColor="#7a6000" /></linearGradient>
        <linearGradient id="pocket"><stop offset="0" stopColor="#a88000" /><stop offset=".05" stopColor="#ffe200" /><stop offset=".93" stopColor="#ffe200" /><stop offset="1" stopColor="#806200" /></linearGradient>
        <linearGradient id="tool" gradientUnits="userSpaceOnUse" x1="1250.500" y1="385" x2="1275.500" y2="387"><stop offset="0" stopColor="#14145a" /><stop offset=".25" stopColor="#2e2ed8" /><stop offset=".45" stopColor="#3636ff" /><stop offset=".65" stopColor="#3636ff" /><stop offset=".85" stopColor="#2a2ac8" /><stop offset="1" stopColor="#1a1a70" /></linearGradient>
      </defs>
      <path d="M1260 272L1241 498Q1244 505 1253 505Q1263 505 1266 498L1285 274Z" fill="url(#tool)" />
      <ellipse cx="1272.500" cy="272.500" rx="12.700" ry="8.500" fill="#3636ff" />
      <g transform="translate(820 480) scale(.40816 .33333)">
        <path d={SIDE} fill="url(#green)" />
        <path d={TOP} fill="#ffd700" />
        <path d={WALL} fill="url(#wall)" />
        <path d="M205 262L327 352 324 407 203 317ZM964 175L1204 358 1202 412 962 222ZM1022 892L1147 980 1143 1037 1020 945Z" fill="#ebbc00" />
        <path d="M327 352L533 173V222L324 407ZM1204 358L1310 265 1305 320 1202 412ZM489 975L594 888 592 940 486 1032Z" fill="#c49d00" />
        <path d="M327 352L324 407M1204 358L1202 412M489 975L486 1032M1147 980L1143 1037" stroke="#ffe000" strokeWidth="3" />
        <path d="M606 488L900 486 1070 489Q1120 500 1137 515L1131 575Q1090 556 1040 552Q1056 565 1058 602Q1046 590 1005 585L660 586Q644 588 644 594L645 565Q648 555 660 550L597 550 592 505Q592 488 606 488Z" fill="url(#pocket)" />
        <path d="M1131 515L1138 517 1148 655 1140 668ZM1056 565L1061 568 1068 685 1062 686ZM645 565L652 556 654 580 645 592Z" fill="#5a4600" />
        <path d="M656 630Q665 605 690 600" fill="none" stroke="#9a7800" strokeWidth="2.500" strokeDasharray="12 6" />
        <path d="M690 600Q705 597 720 597M980 597Q1010 600 1030 612" fill="none" stroke="#e0b400" strokeWidth="2.500" />
        <path d="M1030 612L1041 628M1048 635V685" fill="none" stroke="#9a7800" strokeWidth="2.500" strokeDasharray="14 8" />
        {PILLARS.map(([x, y]) => (
          <path key={x} transform={`translate(${x} ${y})`} d="M704 90L697 222Q704 255 750 255Q792 252 795 228L805 90Q795 122 753 122Q715 120 704 90Z" fill="url(#pillar)" />
        ))}
        {HOLES.map(([x, y, rx, ry]) => (
          <ellipse key={`${x}-${y}`} cx={x} cy={y} rx={rx} ry={ry} fill="url(#hole)" />
        ))}
        <path d="M1271 428L1278 432M1289 455V465M1183 488V498M1420 655V662M1418 682V692" stroke="#6a5200" strokeWidth="3" />
      </g>
    </svg>
  );
}

/* ---------- status bar ---------- */

const Cell = ({ children, className = "" }: Kids) => (
  <div className={`flex h-[23px] shrink-0 items-center justify-center whitespace-nowrap border-l border-t border-r border-l-[#808080] border-t-[#808080] border-r-white pt-px ${className}`}>{children}</div>
);
function Drop({ children, className = "", body = "bg-white" }: Kids & { body?: string }) {
  return (
    <div className={`flex h-[22px] shrink-0 self-end border-l-2 border-t-2 border-l-[#404040] border-t-[#606060] ${className}`}>
      <div className={`flex flex-1 items-center ${body}`}>{children}</div>
      <Btn className="w-[20px]"><Tri /></Btn>
    </div>
  );
}

function StatusBar() {
  return (
    <div className={`flex h-[29px] shrink-0 items-start border-t border-b border-white pt-[2px] text-[13px] tracking-[-0.45px] ${UI}`}>
      <div className="flex h-[24px] w-full items-start pl-[958px]">
        <Cell className="w-[31px]">3D</Cell>
        <Cell className="ml-[2px] w-[58px]">Gview</Cell>
        <Cell className="ml-[2px] w-[45px]">Planes</Cell>
        <Cell className="ml-px w-[22px]">Z</Cell>
        <Drop body="bg-[#ffff80]" className="w-[104px]"><b className="pl-1 pt-px font-['Liberation_Sans'] text-[15px]">0.0</b></Drop>
        <Cell className="ml-[4px] w-[62px]"><span className="flex h-[18px] w-[45px] items-center justify-center bg-[#00ff00]">10</span><span className="ml-[6px]"><Tri /></span></Cell>
        <Cell className="ml-[4px] w-[49px]">Level:</Cell>
        <Drop className="w-[115px]"><span className="pl-[5px]">1</span></Drop>
        <Cell className="ml-[4px] w-[75px]">Attributes</Cell>
        <Drop className="ml-[2px] w-[41px]"><span className="pl-[3px] pt-2 text-[16px]">*</span></Drop>
        <Drop className="ml-[5px] w-[81px]"><i className="mx-[2px] h-[3px] w-full bg-black" /></Drop>
        <Drop className="ml-[5px] w-[87px]"><i className="mx-[2px] h-px w-full bg-black" /></Drop>
        <Cell className="ml-[5px] w-[53px]">WCS</Cell>
        <Cell className="ml-[2px] w-[66px]">Groups</Cell>
        <Cell className="ml-[2px] w-[18px]">!</Cell>
        <Cell className="ml-px w-[18px]">?</Cell>
      </div>
    </div>
  );
}

/* ---------- taskbar ---------- */

const SwLogo = () => (
  <svg width="38" height="37" viewBox="0 0 38 37">
    <path d="M0 8L18 0l20 8-18 7z" fill="#f03030" />
    <path d="M0 8l20 7v22L2 29z" fill="#e01010" />
    <path d="M38 8l-18 7v22l17-8z" fill="#b00808" />
    <text x="3" y="27" fontFamily="Liberation Sans" fontWeight="700" fontSize="19" fill="#fff" transform="skewY(8) translate(0 -1)">S</text>
    <text x="19" y="32" fontFamily="Liberation Sans" fontWeight="700" fontSize="18" fill="#fff" transform="skewY(-12) translate(0 2)">W</text>
  </svg>
);

function Taskbar() {
  return (
    <div className={`flex h-[52px] shrink-0 items-start pl-[2px] pt-[2px] ${UI}`}>
      <Btn className="h-[46px] w-[62px] text-[14px] font-medium tracking-[-0.1px]">
        <svg width="19" height="18" viewBox="0 0 19 18" className="mr-[2px]">
          <path d="M3 2c2-2 4-1 6 0L7.500 8C5 7 3 7 1.500 8z" fill="#e85820" />
          <path d="M10 2.500c2 1 4 1 7.500 0L16 8.500c-3 1-5 1-7 0z" fill="#70b830" />
          <path d="M1.200 9c2-1.500 4-1 6 0L6 15.500c-2-1-4-1-6 0z" fill="#4080e0" />
          <path d="M8.500 9.500c2 1 4 1 7 0L14 16c-3 1-5 1-7 0z" fill="#f8c820" />
        </svg>
        Start
      </Btn>
      <Btn className="ml-[9px] h-[46px] w-[48px]">
        <svg width="40" height="39" viewBox="0 0 40 39">
          <path d="M3 2h10l2 3h11l2 4h10v27H2z" fill="#e8c85c" stroke="#b89838" strokeWidth=".8" />
          <path d="M6 1h6v4H6zM16 4h9v3h-9zM27 7h10v3H27z" fill="#fff" />
          <path d="M6 2h2v2H6z" fill="#30a030" /><path d="M16 5h2v2h-2z" fill="#e03020" /><path d="M27 7h3v2h-3z" fill="#2080d0" />
          <path d="M1 10h38l-1 26H2z" fill="#f8e498" /><path d="M1 10h20L3 34z" fill="#fff4c0" />
          <path d="M5 38V25q0-3 3-3h24q3 0 3 3v13h-8v-8H14v8z" fill="#88c8f0" stroke="#4a98d0" />
        </svg>
      </Btn>
      <Btn className="h-[46px] w-[4px]" /><Btn className="h-[46px] w-[4px]" />
      <svg width="36" height="36" viewBox="0 0 36 36" className="ml-[12px] mt-[5px]">
        <circle cx="18" cy="18" r="17.500" fill="#4caf50" />
        <path d="M18 18L2.500 10A17.500 17.500 0 0 1 34 10.500z" fill="#e03028" />
        <path d="M18 10h15.500A17.500 17.500 0 0 1 17 35.500L26 20z" fill="#fdd020" />
        <circle cx="18" cy="18" r="8" fill="#fff" /><circle cx="18" cy="18" r="6.500" fill="#2c74d0" />
      </svg>
      <Btn className="ml-[12px] h-[46px] w-[56px]">
        <svg width="40" height="39" viewBox="0 0 40 39">
          <circle cx="20" cy="19" r="18" fill="#1c4c98" /><circle cx="24" cy="10" r="9" fill="#58b0ec" />
          <path d="M2 8l5-4 3 5 8 2-3 5 3 5c3 6 10 4 13-1 3-4 3-10 0-14 6 5 9 12 8 18-2 9-10 15-19 15C9 39 1 31 1 20z" fill="#e06810" />
          <path d="M34 6c6 8 6 17 0 24-5 6-11 8-17 7 8-1 14-6 16-13 1-6 2-12 1-18z" fill="#f8c030" />
          <path d="M4 22c2 8 10 12 16 9-8 0-10-5-11-9z" fill="#b84008" />
        </svg>
      </Btn>
      <div className="ml-[9px] mt-[4px]"><SwLogo /></div>
      <svg width="38" height="35" viewBox="0 0 38 35" className="ml-[22px] mt-[4px]">
        <path d="M1 0h36v35H1z" fill="#b4b4b4" /><path d="M3 4h32v24H3z" fill="#303030" />
        <path d="M28 7H16l-5 3v12l4 3h13" fill="none" stroke="#000" strokeWidth="3" />
        <path d="M15 12l14 5-14 4 4-4z" fill="#20e040" /><path d="M3 31h32" stroke="#eee" strokeWidth="2.500" strokeDasharray="1 1" />
      </svg>
      <Btn className="ml-[11px] h-[46px] w-[52px] pr-[3px]"><SwLogo /></Btn>
      <Btn className="h-[46px] w-[4px]" />
      <div className={`ml-[2px] flex h-[46px] w-[56px] items-center justify-center bg-white ${SUNK}`}>
        <svg width="42" height="38" viewBox="0 0 42 38">
          <path d="M2 3l7-1 16 30-7 3z" fill="#606060" stroke="#282828" /><path d="M19 2l7 1L9 36l-7-1z" fill="#b8b8b8" stroke="#484848" />
          <path d="M26 8l8-3 4 3-1 4-6 2 6 1 1 4-4 4-8 1-3-3" fill="none" stroke="#303030" strokeWidth="4.500" strokeLinejoin="round" />
          <path d="M26 8l8-3 4 3-1 4-6 2 6 1 1 4-4 4-8 1-3-3" fill="none" stroke="#8c8c8c" strokeWidth="2" strokeLinejoin="round" />
        </svg>
      </div>
      <div className="ml-auto mt-[1px] flex h-[47px] w-[123px] items-center rounded-tl-lg border-l border-t border-b-2 border-l-white border-t-white border-b-[#808080] pl-[13px]">
        <div className="flex h-[21px] w-[63px] items-center justify-center border-2 border-[#60e820] bg-gradient-to-b from-[#28a048] to-[#045818] font-['Liberation_Sans'] text-[14px] font-medium text-white">96%</div>
        <i className="h-[11px] w-[3px] bg-[#084010]" />
        <svg width="19" height="13" viewBox="0 0 19 13" className="ml-[10px]"><path d="M0 5h2l2-4h8v2h6v2h-6v3h6v2h-6v2H4L2 8H0z" fill="#000" /></svg>
      </div>
      <div className="flex h-[48px] w-[277px] items-center border-l-2 border-t border-l-[#808080] border-t-[#808080]">
        <svg width="7" height="10" viewBox="0 0 7 10" className="ml-[6px]"><path d="M0 4l3.500-3L7 4M0 9l3.500-3L7 9" fill="none" stroke="#000" strokeWidth="1.500" /></svg>
        <svg width="20" height="20" viewBox="0 0 20 20" className="ml-[14px]"><path d="M2 1v18" stroke="#666" strokeWidth="2" /><path d="M3 2q4-2 7 1t7 0v8q-4 2-7-1t-7 0z" fill="#fff" stroke="#777" /><circle cx="13" cy="14" r="5.500" fill="#e02820" /><path d="M11 12l4 4M15 12l-4 4" stroke="#fff" strokeWidth="1.800" /></svg>
        <svg width="20" height="20" viewBox="0 0 20 20" className="ml-[8px]"><path d="M1.500 3h3V1h4v2h3v16h-10z" fill="#fff" stroke="#666" strokeWidth="1.400" /><path d="M14 2v4M18 2v4M12.500 6h7v5l-2 2h-3l-2-2zM16 13v5h-3" fill="#fff" stroke="#666" strokeWidth="1.400" /></svg>
        <svg width="18" height="16" viewBox="0 0 18 16" className="ml-[11px]" fill="#fff" stroke="#777"><path d="M.5 12h2v3h-2zM4 9.500h2V15H4zM7.500 6.500h2V15h-2zM11 3.500h2V15h-2zM14.500.5h2V15h-2z" /></svg>
        <svg width="21" height="20" viewBox="0 0 21 20" className="ml-[11px]"><path d="M1 7h4l5-6v18l-5-6H1z" fill="#fff" stroke="#777" strokeWidth="1.300" /><path d="M13 6q2 4 0 8M16 4q4 6 0 12" fill="none" stroke="#888" strokeWidth="1.400" /></svg>
        <svg width="21" height="19" viewBox="0 0 21 19" className="ml-[9px]"><path d="M6 0l5 4 5-4 5 4-4 3 4 4-5 4-5-4-5 4-6-4 4-4-4-3z" fill="#58b0e8" stroke="#2878b8" strokeWidth=".6" /><path d="M11 4l6 3-6 4-6-4z" fill="#e8f4fc" /><circle cx="14" cy="13.500" r="5" fill="#30a038" /><path d="M11.500 13.500l2 2 3-4" stroke="#fff" strokeWidth="1.500" fill="none" /></svg>
        <div className="ml-[8px] w-[74px] pb-px text-center text-[14.500px] leading-[21px] tracking-[-0.55px]"><span className="tracking-[-0.1px]">8:01 PM</span><br /><span className="tracking-[-0.05px]">6/9/2012</span></div>
        <svg width="19" height="16" viewBox="0 0 19 16" className="ml-[3px]"><path d="M1 1h17v11H1z" fill="#2468d0" stroke="#6898e0" /><path d="M1 1h12L4 11H1z" fill="#5c9cf0" /><path d="M0 13h19v2H0z" fill="#b8c8e8" /></svg>
      </div>
    </div>
  );
}

/* ---------- page ---------- */

export default function App() {
  return (
    <div className="flex h-[1080px] w-[1920px] flex-col overflow-hidden bg-[#d4d0c8] text-black">
      <div className={`flex h-[23px] shrink-0 items-center bg-gradient-to-r from-[#808080] to-[#c4c4c4] text-[15.500px] text-[#d4d0c8] ${UI}`}>
        <svg width="18" height="20" viewBox="0 0 18 20" className="ml-[3px]">
          <path d="M1 2l5-1 10 15-3 1z" fill="#222" /><path d="M12 0h4L6 19H1z" fill="#e8e8e8" stroke="#222" strokeWidth=".8" />
          <path d="M13 6l4 1-2 4-4 2" fill="none" stroke="#e8b020" strokeWidth="1.500" /><path d="M6 5l4 3" stroke="#30a8e8" strokeWidth="1.500" />
        </svg>
        <span className="ml-[3px] whitespace-pre tracking-[0.4px]">{"Mastercam Mill X3  C:\\USERS\\PARADOX\\DESKTOP\\ROLLCONTROL\\BASEPLATE.MCX"}</span>
        <div className="ml-auto mr-[2px] flex">
          <Btn className="h-[19px] w-[21px] pr-1 pt-[9px]"><i className="h-[2px] w-2 bg-black" /></Btn>
          <Btn className="h-[19px] w-[21px]"><svg width="12" height="11" viewBox="0 0 12 11"><path d="M3.500 4V1h8v5h-3M.5 4.500h8v6h-8zM.5 5h8M3.500 1.300h8" fill="none" stroke="#000" /></svg></Btn>
          <Btn className="ml-[2px] h-[19px] w-[21px]"><svg width="9" height="9" viewBox="0 0 9 9"><path d="M.5.500l8 8M8.500.500l-8 8" stroke="#000" strokeWidth="2" /></svg></Btn>
        </div>
      </div>
      <div className={`flex h-[25px] shrink-0 items-center pb-px pl-[7px] text-[13.500px] tracking-[-0.25px] text-[#808080] ${UI}`}>
        <span className="w-[34px]">File</span><span className="w-[39px]">Edit</span><span className="w-[43px]">View</span>
        <span className="w-[62px]">Analyze</span><span className="w-[56px]">Create</span><span className="w-[50px]">Solids</span>
        <span className="w-[53px]">Xform</span><span className="w-[100px]">Machine Type</span><span className="w-[76px]">Toolpaths</span>
        <span className="w-[58px]">Screen</span><span className="w-[34px]">Art</span><span className="w-[65px]">Settings</span><span>Help</span>
      </div>
      <HLine />
      <div className="flex h-[28px] shrink-0">
        <Group grip="mr-[4px]" className="w-[153px]" items="new open save print preview post" />
        <Group className="w-[61px]" items="-undo -redo" />
        <Group grip="mr-[5px]" className="w-[269px]" items="pan repaint | zoomPlusBox zoomBox zoomEq | zoomMinusBox zoomMinus | bin1 bin2 bin3" />
        <Group grip="mr-[5px]" className="w-[107px]" items="cubeTop cubeFront cubeRight cubeIso" />
        <Group grip="mr-[5px]" className="w-[55px]" items="cubeRed v" />
        <Group className="w-[96px]" items="globe v ball v" />
        <Group grip="mr-[5px]" className="w-[125px]" items="pencil pencils v | -unerase -v" />
        <Group grip="mr-[5px]" className="w-[178px]" items="what chains | puzzle brush sigma exit v" />
      </div>
      <div className="w-[1044px]"><HLine /></div>
      <div className="flex h-[28px] shrink-0">
        <Group grip="mr-[4px]" className="w-[294px]" items="plus v line v circ v rect v fillet v spline v cyl v" />
        <Group grip="mr-[5px]" className="w-[78px]" items="trim brk v" />
        <Group grip="mr-[5px]" className="w-[264px]" items="x1 x2 x3 x4 x5 x6 | x7 v x8 x9 v" />
        <Group grip="mr-[5px]" className="w-[79px]" items="bulb v dim" />
        <Group grip="mr-[5px]" className="w-[275px]" items="s1 s2 s3 s4 s5 v | m1 v m2 v m3 v" />
      </div>
      <div className="w-[1366px]"><HLine /></div>
      <CoordBar />
      <HLine />
      <div className="flex h-9 shrink-0 items-center bg-[#ffffcc] pl-[2px] pt-px">
        <Btn className="h-[30px] w-8"><Ic n="block" s={18} /></Btn>
        <i className="ml-1 h-[31px] w-px bg-[#808080]" />
        <Btn className="ml-[1222px] h-[30px] w-8"><Ic n="help" s={19} /></Btn>
      </div>
      <div className="h-px shrink-0 bg-[#808080]" />

      <div className="flex h-[814px] shrink-0">
        <div className="flex w-[46px] shrink-0 flex-col pt-[9px]">
          <HLine />
          <HGrip className="ml-[3px] mr-[3px] mt-[2px]" />
          <SideIcons className="ml-[5px] mr-[5px] mt-[4px] h-[327px]" items="sExt sRev sSwp sLoft sFil+ | sShell sBool+ sDraft sTrim sThick | sRem sGrid sSurf sLast" />
          <HLine />
        </div>
        <div className="flex w-[298px] shrink-0 flex-col pl-px">
          <VerifyDialog />
          <HScroll />
        </div>
        <div className="flex shrink-0 flex-col border-l border-t border-r-2 border-l-[#404040] border-t-black border-r-white"><Viewport /></div>
        <div className="flex flex-1 flex-col">
          <div className="h-px shrink-0 bg-white" />
          <HLine />
          <HGrip className="ml-[3px] mr-[3px] mt-[2px]" />
          <div className="ml-[6px] mt-[4px] flex h-[23px] shrink-0 items-center"><Ic n="open" /></div>
          <div className="h-[203px] shrink-0" />
          <HLine />
          <HGrip className="ml-[3px] mr-[3px] mt-[2px]" />
          <SideIcons g className="ml-[5px] mr-[5px] mt-[2px] h-[389px]" items="qPlus qBone qLine qCirc qSpl qSq qDia qGlobe | qTwo qTwo | qFold qBox | qDim | no gear qLine" />
          <HLine />
        </div>
      </div>
      <StatusBar />
      <Taskbar />
    </div>
  );
}
